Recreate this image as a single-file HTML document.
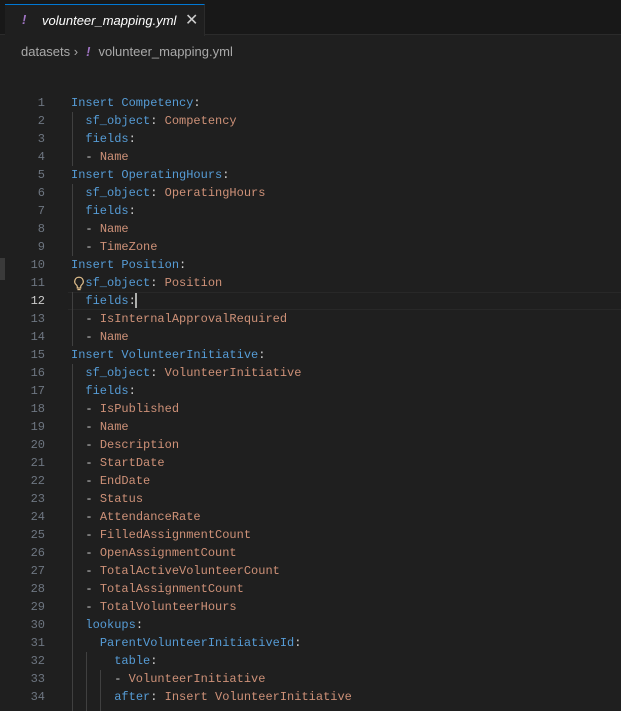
<!DOCTYPE html>
<html><head><meta charset="utf-8"><style>
body{margin:0;width:621px;height:711px;background:#1f1f1f;overflow:hidden;position:relative;font-family:"Liberation Sans",sans-serif}
.top{position:absolute;left:0;top:0;width:621px;height:35px;background:#181818;border-bottom:1px solid #2b2b2b;box-sizing:border-box}
.tab{position:absolute;left:5px;top:4px;width:200px;height:32px;background:#1f1f1f;border-top:1px solid #0078d4;border-right:1px solid #2b2b2b;box-sizing:border-box;color:#fff;font-style:italic;font-size:13px}
.tab .bang{position:absolute;left:17px;top:7px;color:#a074c4;font-weight:bold;font-style:italic}
.tab .nm{position:absolute;left:37px;top:8px}
.tab .x{position:absolute;left:180px;top:5px;font-style:normal;font-size:16px;color:#ccc}
.bc{position:absolute;left:21px;top:44px;font-size:13px;color:#a9a9a9}
.bc .bang{color:#a074c4;font-weight:bold;font-style:italic;margin:0 8px 0 8px}
.ln{position:absolute;left:0;width:45px;text-align:right;font:12px/18px "Liberation Mono",monospace;color:#6e7681}
.ln.a{color:#ccc}
.cd{position:absolute;left:71px;font:12px/18px "Liberation Mono",monospace;white-space:pre;color:#d4d4d4}
.k{color:#569cd6}.v{color:#ce9178}
.g{position:absolute;width:1px;background:#404040}
</style></head><body>
<div class="top"><div class="tab"><span class="bang">!</span><span class="nm">volunteer_mapping.yml</span><span class="x">✕</span></div></div>
<div class="bc">datasets ›<span class="bang">!</span>volunteer_mapping.yml</div>
<div style="position:absolute;left:0;top:258px;width:5px;height:22px;background:#3a3a3a"></div>
<div style="position:absolute;left:68px;top:292px;width:553px;height:16px;border-top:1px solid #282828;border-bottom:1px solid #282828"></div>
<div class="g" style="left:72px;top:112px;height:54px"></div>
<div class="g" style="left:72px;top:184px;height:72px"></div>
<div class="g" style="left:72px;top:292px;height:54px"></div>
<div class="g" style="left:72px;top:364px;height:347px"></div>
<div class="g" style="left:86px;top:652px;height:59px"></div>
<div class="g" style="left:100px;top:670px;height:41px"></div>
<div style="position:absolute;left:135px;top:293px;width:2px;height:15px;background:#aeafad"></div>
<svg style="position:absolute;left:73px;top:276px" width="12" height="15" viewBox="0 0 12 15"><path d="M6 1.2a4.3 4.3 0 0 0-2.6 7.7c.6.5.9 1.1.9 1.8v1.3h3.4v-1.3c0-.7.3-1.3.9-1.8A4.3 4.3 0 0 0 6 1.2z" fill="none" stroke="#e2c08d" stroke-width="1.2"/><path d="M4.4 13.6h3.2" stroke="#e2c08d" stroke-width="1.2"/></svg>
<div id="c"></div>
<script>
var L=[
'<span class="k">Insert Competency</span>:',
'  <span class="k">sf_object</span>: <span class="v">Competency</span>',
'  <span class="k">fields</span>:',
'  - <span class="v">Name</span>',
'<span class="k">Insert OperatingHours</span>:',
'  <span class="k">sf_object</span>: <span class="v">OperatingHours</span>',
'  <span class="k">fields</span>:',
'  - <span class="v">Name</span>',
'  - <span class="v">TimeZone</span>',
'<span class="k">Insert Position</span>:',
'  <span class="k">sf_object</span>: <span class="v">Position</span>',
'  <span class="k">fields</span>:',
'  - <span class="v">IsInternalApprovalRequired</span>',
'  - <span class="v">Name</span>',
'<span class="k">Insert VolunteerInitiative</span>:',
'  <span class="k">sf_object</span>: <span class="v">VolunteerInitiative</span>',
'  <span class="k">fields</span>:',
'  - <span class="v">IsPublished</span>',
'  - <span class="v">Name</span>',
'  - <span class="v">Description</span>',
'  - <span class="v">StartDate</span>',
'  - <span class="v">EndDate</span>',
'  - <span class="v">Status</span>',
'  - <span class="v">AttendanceRate</span>',
'  - <span class="v">FilledAssignmentCount</span>',
'  - <span class="v">OpenAssignmentCount</span>',
'  - <span class="v">TotalActiveVolunteerCount</span>',
'  - <span class="v">TotalAssignmentCount</span>',
'  - <span class="v">TotalVolunteerHours</span>',
'  <span class="k">lookups</span>:',
'    <span class="k">ParentVolunteerInitiativeId</span>:',
'      <span class="k">table</span>:',
'      - <span class="v">VolunteerInitiative</span>',
'      <span class="k">after</span>: <span class="v">Insert VolunteerInitiative</span>'];
var h='';for(var i=0;i<L.length;i++){var t=94+i*18;h+='<div class="ln'+(i==11?' a':'')+'" style="top:'+t+'px">'+(i+1)+'</div><div class="cd" style="top:'+t+'px">'+L[i]+'</div>';}
document.getElementById('c').innerHTML=h;
</script>
</body></html>
